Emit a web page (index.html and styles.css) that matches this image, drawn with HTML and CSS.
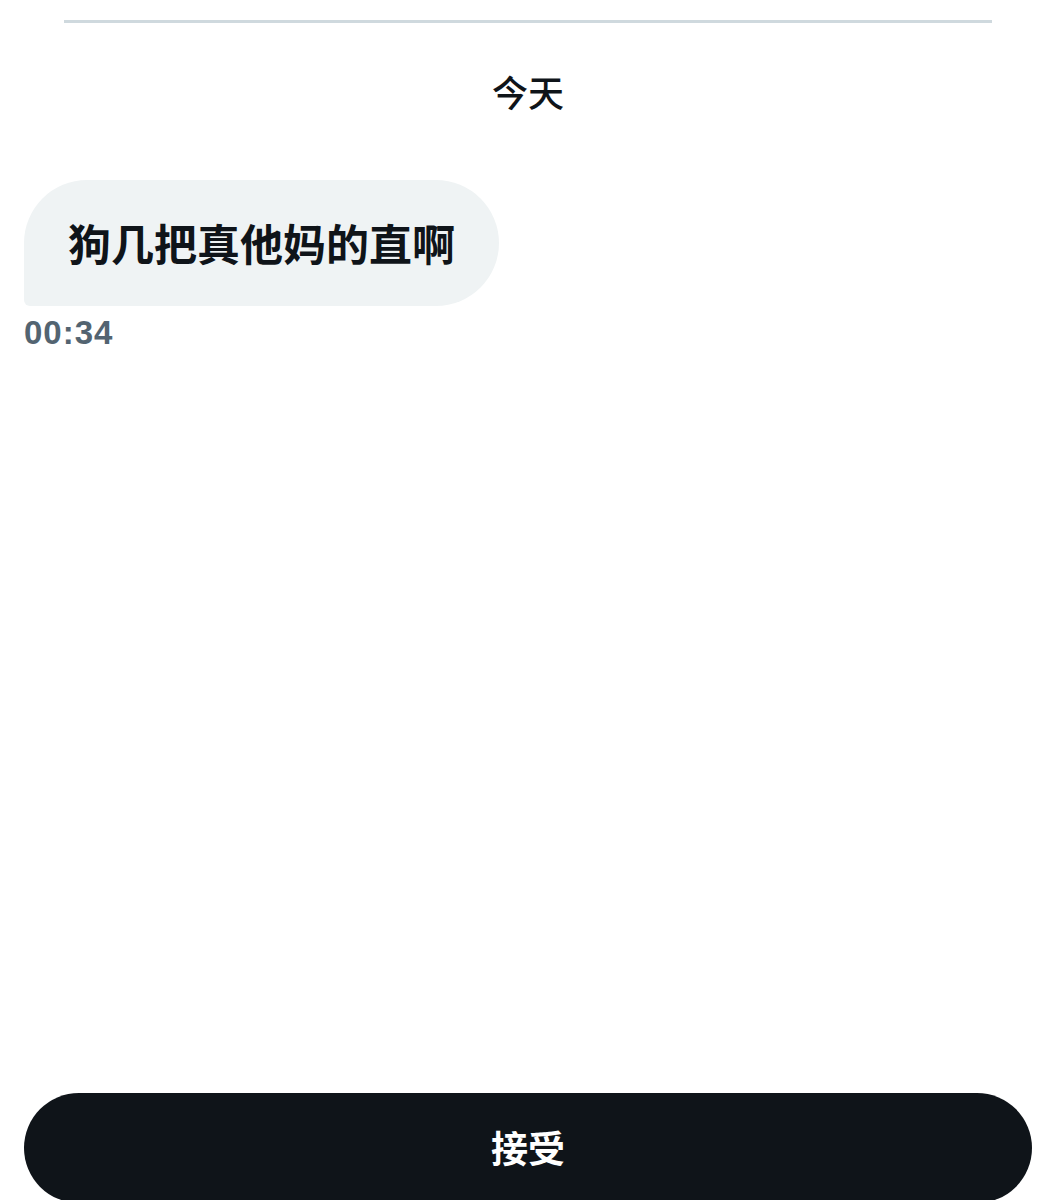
FILE: index.html
```html
<!doctype html>
<html lang="zh-CN">
<head>
  <meta charset="UTF-8">
  <title>消息请求</title>
  <link rel="stylesheet" href="styles.css">
</head>
<body>
<div class="screen">
  <div class="divider"></div>

  <div class="day">今天</div>

  <div class="message">
    <div class="bubble">狗几把真他妈的直啊</div>
    <div class="time">00:34</div>
  </div>

  <button class="accept">接受</button>
</div>
</body>
</html>
```

FILE: styles.css
```css
body {
  margin: 0;
  background: #fff;
  font-family: "Liberation Sans", "Noto Sans CJK SC", sans-serif;
  color: #0f1419;
}

.screen {
  height: 1200px;
  display: flex;
  flex-direction: column;
  overflow: hidden;
}

.divider {
  height: 3px;
  margin: 20px 64px 0;
  background: #cfd9de;
}

.day {
  margin-top: 46px;
  text-align: center;
  font-family: "Noto Sans CJK SC", sans-serif;
  font-size: 36px;
  font-weight: 500;
  line-height: 44px;
}

.message {
  margin: 67px 24px 0;
  display: flex;
  flex-direction: column;
  align-items: flex-start;
}

.bubble {
  padding: 40px 44px 42px;
  background: #eff3f4;
  border-radius: 63px 63px 63px 6px;
  font-family: "Noto Sans CJK SC", sans-serif;
  font-size: 43px;
  font-weight: 700;
  line-height: 44px;
}

.time {
  margin-top: 9px;
  color: #536471;
  font-size: 33px;
  font-weight: 700;
  line-height: 36px;
  letter-spacing: 1px;
}

.accept {
  margin: auto 24px -3px;
  height: 110px;
  padding-bottom: 4px;
  border: 0;
  border-radius: 55px;
  background: #0f1419;
  color: #fff;
  font-family: "Noto Sans CJK SC", sans-serif;
  font-size: 37px;
  font-weight: 700;
}
```
